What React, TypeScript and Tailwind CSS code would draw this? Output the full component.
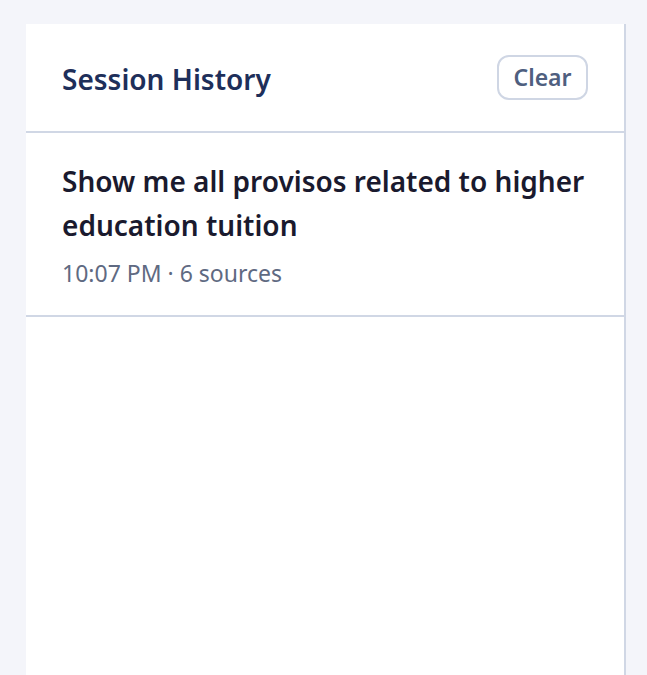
export default function App() {
  return (
    <div
      className="min-h-[675px] w-full bg-[#f4f5fa] pl-[26px] pt-[24px] flex"
      style={{ fontFamily: '"Noto Sans", "Open Sans", sans-serif' }}
    >
      <div className="w-[600px] bg-white border-r-2 border-[#d0d7e5] flex flex-col">
        <div className="h-[109px] px-[36px] flex items-center justify-between border-b-2 border-[#d0d7e5]">
          <h2 className="mt-[2px] text-[28px] font-semibold text-[#1e2f5a]">Session History</h2>
          <button className="w-[91px] h-[45px] rounded-[12px] border-2 border-[#cfd6e4] text-[23px] font-semibold text-[#4f5f7f]">
            Clear
          </button>
        </div>

        <div className="px-[36px] pt-[26px] pb-[24px] border-b-2 border-[#d0d7e5]">
          <p className="text-[28px] leading-[44px] font-semibold text-[#1a1a2e]">
            Show me all provisos related to higher education tuition
          </p>
          <p className="mt-[8px] text-[23px] leading-[36px] text-[#5f6a82]">10:07 PM · 6 sources</p>
        </div>
      </div>
    </div>
  );
}
